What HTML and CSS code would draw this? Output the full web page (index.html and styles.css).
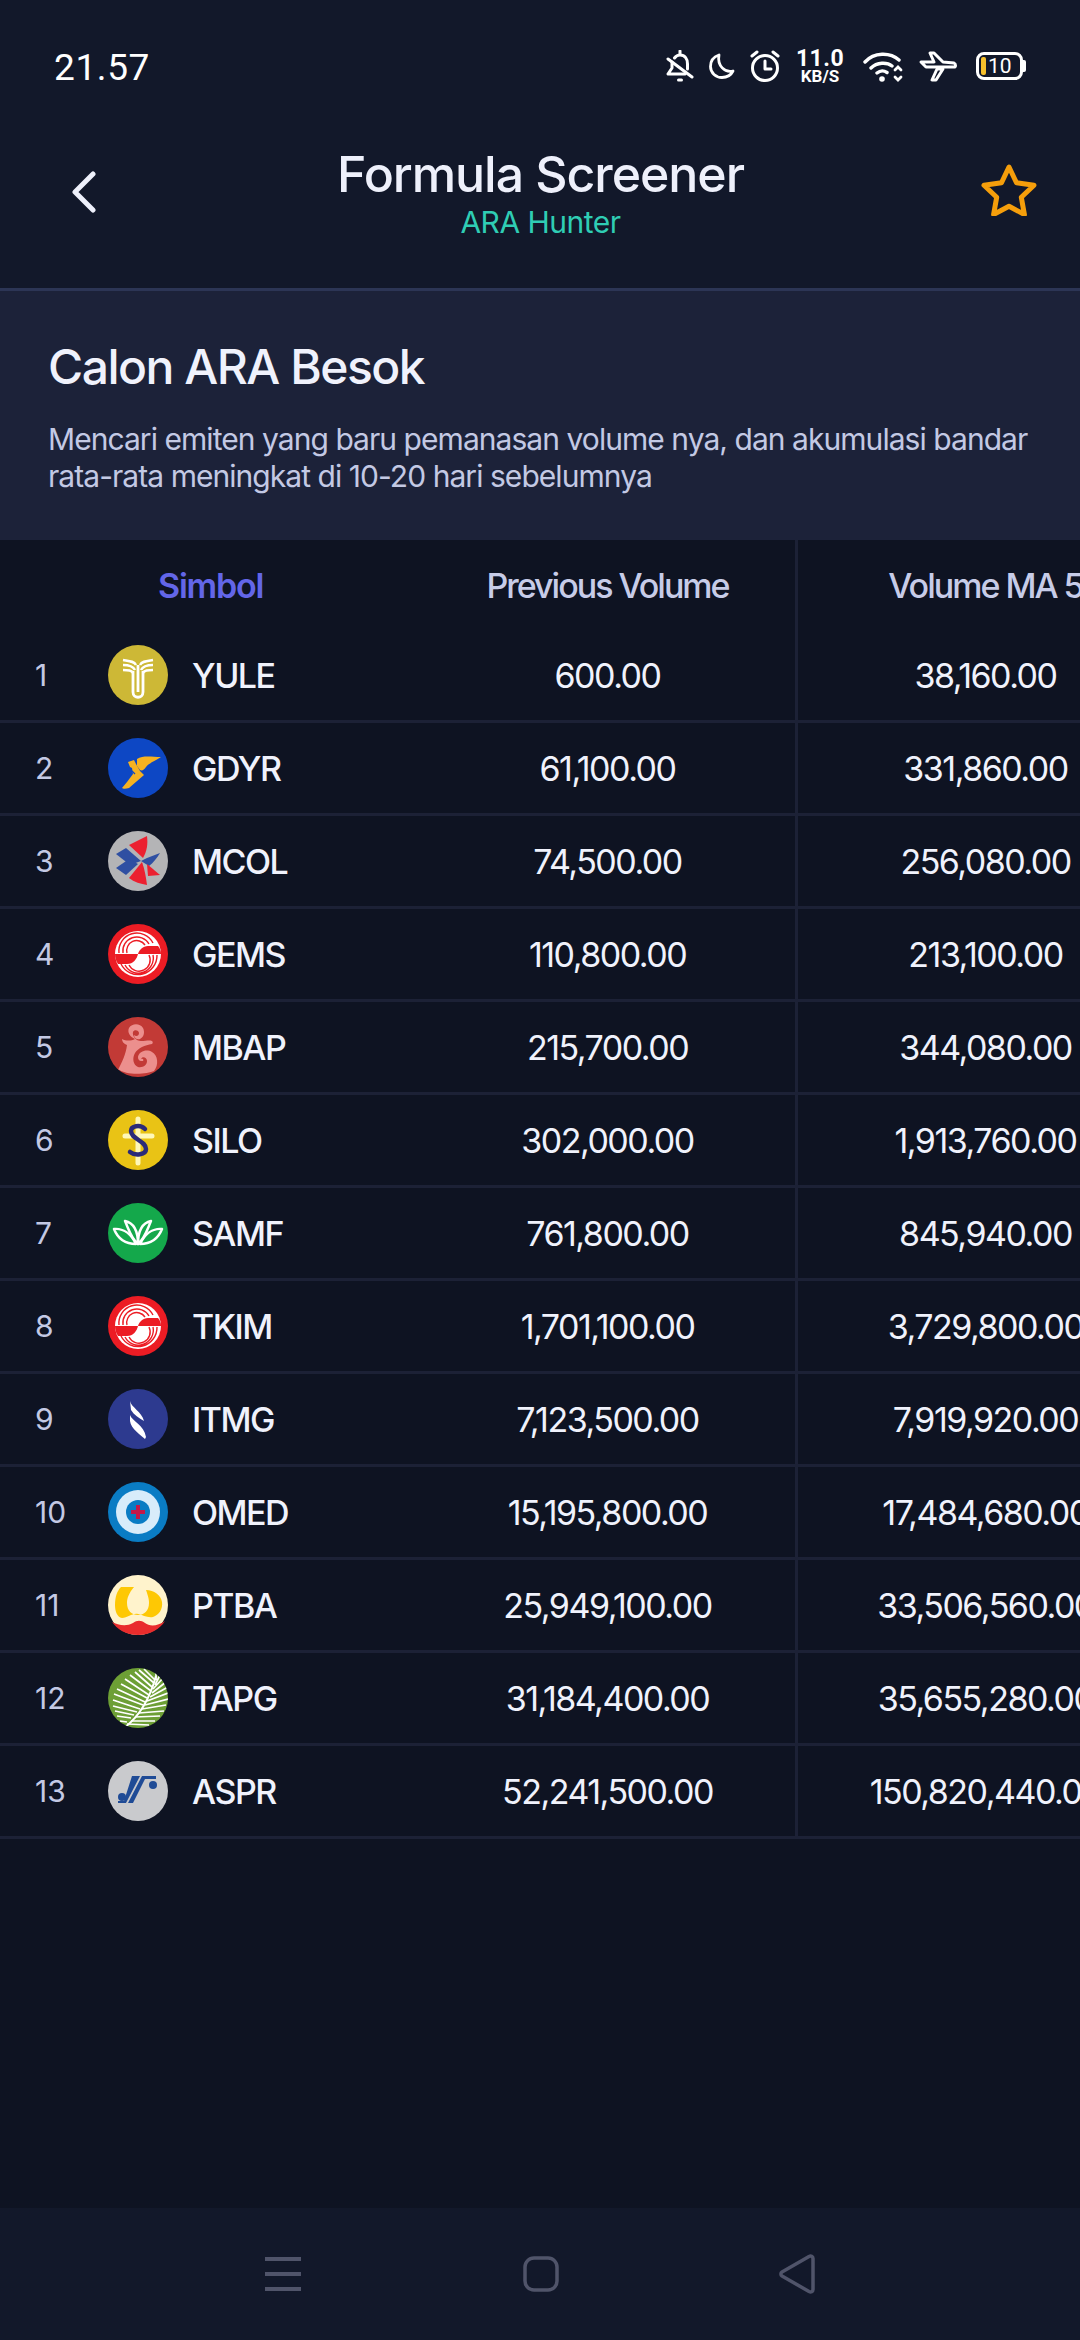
FILE: index.html
```html
<!DOCTYPE html>
<html lang="id">
<head>
<meta charset="utf-8">
<title>Formula Screener</title>
<link rel="stylesheet" href="styles.css">
</head>
<body>
<div class="screen">
  <header class="top">
    <div class="status">
      <span class="clock">21.57</span>
      <div class="status-icons">
        <svg class="i-bell" width="28" height="32" viewBox="0 0 28 32" fill="none" stroke="#fff" stroke-width="3" stroke-linejoin="round" stroke-linecap="round"><path d="M14 1v4M8.500 8C10 6 12 5 14 5c5 0 7.500 4 7.500 9v5M6 12v6l-4 6h17"/><path d="M2 9l24 18"/><path d="M12.500 30h3"/></svg>
        <svg class="i-moon" width="26" height="26" viewBox="0 0 26 26" fill="none" stroke="#fff" stroke-width="2.800" stroke-linejoin="round"><path d="M10 2C4 4 1.500 9 1.500 13.500 1.500 20 7 24.500 13 24.500c5 0 9-2.500 11-6.500-8 2-16-5-14-16z"/></svg>
        <svg class="i-alarm" width="30" height="32" viewBox="0 0 30 32" fill="none" stroke="#fff" stroke-width="3" stroke-linecap="round" stroke-linejoin="round"><circle cx="15" cy="18" r="12.500"/><path d="M15 11v8h6M2 6l5-4M28 6l-5-4"/></svg>
        <div class="speed"><span class="speed-n">11.0</span><span class="speed-u">KB/S</span></div>
        <svg class="i-wifi" width="40" height="31" viewBox="0 0 40 31" fill="none" stroke="#fff" stroke-width="3.400" stroke-linecap="round"><path d="M2 11C11 1 27 1 36 9M8 17c6-6 16-6 21-2M14 22c3-2.500 7-2.500 10-.5"/><circle cx="19" cy="28" r="2.800" fill="#fff" stroke="none"/><path d="M32 19l3-3 3 3M32 26l3 3 3-3" stroke-width="2.800"/></svg>
        <svg class="i-plane" width="38" height="31" viewBox="0 0 38 31" fill="none" stroke="#fff" stroke-width="3" stroke-linejoin="round"><path d="M2 11l5 5h28c2 0 2-3 0-4l-11-1-9-9h-4l4 9H5z"/><path d="M13 29h4l7-11h-6z"/></svg>
        <div class="battery"><span class="battery-fill"></span><span class="battery-n">10</span></div>
      </div>
    </div>
    <div class="titlebar">
      <svg class="back" width="24" height="42" viewBox="0 0 24 42" fill="none" stroke="#eef0fb" stroke-width="5" stroke-linecap="round" stroke-linejoin="round"><path d="M21 3L3 21l18 18"/></svg>
      <div class="titles">
        <div class="title">Formula Screener</div>
        <div class="subtitle">ARA Hunter</div>
      </div>
      <svg class="star" width="56" height="52" viewBox="0 0 56 52" fill="none" stroke="#f59e0b" stroke-width="5" stroke-linejoin="round"><path d="M28 3l7.500 15.800 17.500 2.400-12.700 12.100 3.100 17.200L28 42.200 12.600 50.500l3.100-17.200L3 21.200l17.500-2.400z"/></svg>
    </div>
  </header>

  <section class="banner">
    <h1 class="banner-title">Calon ARA Besok</h1>
    <p class="banner-text">Mencari emiten yang baru pemanasan volume nya, dan akumulasi bandar rata-rata meningkat di 10-20 hari sebelumnya</p>
  </section>

  <main class="table">
    <div class="row head">
      <div class="c-sym head-sym">Simbol</div>
      <div class="c-val">Previous Volume</div>
      <div class="c-val">Volume MA 5</div>
    </div>

    <div class="row">
      <div class="c-sym"><span class="no">1</span>
        <svg class="logo" viewBox="0 0 60 60"><circle cx="30" cy="30" r="30" fill="#cdb836"/><g fill="none" stroke="#fff" stroke-width="2.500"><path d="M15 15c6 1 11 1 13 5M45 15c-6 1-11 1-13 5M15 20c6 0 10 1 12 5M45 20c-6 0-10 1-12 5M15 25c5 0 9 0 10 3M45 25c-5 0-9 0-10 3"/><path d="M25 26v21c0 7 10 7 10 0V26M30 20v27" stroke-width="2.800"/></g></svg>
        <span class="sym">YULE</span></div>
      <div class="c-val">600.00</div><div class="c-val">38,160.00</div>
    </div>

    <div class="row">
      <div class="c-sym"><span class="no">2</span>
        <svg class="logo" viewBox="0 0 60 60"><circle cx="30" cy="30" r="30" fill="#0d47c4"/><path d="M29 21C35 17 44 19 53 19 47 23 41 25 38 29 36 32 34 33 32 32L29 28z" fill="#f6b221"/><path d="M20 24l6-2 2 4 4 7 4 4L21 50c-3 1-6 1-7 0l5-6 6-8-1-6-2-1z" fill="#f6b221"/><path d="M24 33l3 3" stroke="#0d47c4" stroke-width="1.200"/></svg>
        <span class="sym">GDYR</span></div>
      <div class="c-val">61,100.00</div><div class="c-val">331,860.00</div>
    </div>

    <div class="row">
      <div class="c-sym"><span class="no">3</span>
        <svg class="logo" viewBox="0 0 60 60"><circle cx="30" cy="30" r="30" fill="#b4b4b6"/><path d="M21 14l18-9c1 8 0 15-4 22z" fill="#ec2030"/><path d="M39 27l13-5c-3 5-7 10-11 13l-8-5z" fill="#2f4fa2"/><path d="M8 23l10-6 15 13-11 4z" fill="#2f4fa2"/><path d="M8 37l13-9 9 5-12 11z" fill="#2f4fa2"/><path d="M21 47l13-16c3 8 4 16 5 23-6-1-13-3-18-7z" fill="#ec2030"/><path d="M39 33l13 11-12 1z" fill="#ec2030"/></svg>
        <span class="sym">MCOL</span></div>
      <div class="c-val">74,500.00</div><div class="c-val">256,080.00</div>
    </div>

    <div class="row">
      <div class="c-sym"><span class="no">4</span>
        <svg class="logo" viewBox="0 0 60 60"><use href="#sinarmas"/></svg>
        <span class="sym">GEMS</span></div>
      <div class="c-val">110,800.00</div><div class="c-val">213,100.00</div>
    </div>

    <div class="row">
      <div class="c-sym"><span class="no">5</span>
        <svg class="logo" viewBox="0 0 60 60"><circle cx="30" cy="30" r="30" fill="#c23a36"/><path d="M10 53c4-8 8-16 9-25-3-1-5-3-5-6 4 2 9 2 13 0-5-2-8-7-6-11 3-5 11-5 14 0 2 4 1 9-3 11-3 1-6-1-6-4 2 2 5 1 5-2 0-3-5-4-6-1-1 4 3 9 8 9 5 0 8-1 11 0 1 1 1 2 0 3-7 1-14 4-17 9-3 5-2 12 3 14 5 1 9-2 9-6 0-4-5-5-6-2 2-1 3 1 2 2 0 0-5 1-5-4 1-6 9-8 14-5 6 3 7 13 2 19-7 3-27 5-36-2z" fill="#ec8f8d"/></svg>
        <span class="sym">MBAP</span></div>
      <div class="c-val">215,700.00</div><div class="c-val">344,080.00</div>
    </div>

    <div class="row">
      <div class="c-sym"><span class="no">6</span>
        <svg class="logo" viewBox="0 0 60 60"><circle cx="30" cy="30" r="30" fill="#e9c315"/><path d="M17 26h27M30 9v44" stroke="#fff8b8" stroke-width="5" stroke-linecap="round"/><path d="M37 19C32 14 23 16 23 21c0 8 15 10 15 18 0 6-11 7-16 3" fill="none" stroke="#2b2a78" stroke-width="4.500" stroke-linecap="round"/></svg>
        <span class="sym">SILO</span></div>
      <div class="c-val">302,000.00</div><div class="c-val">1,913,760.00</div>
    </div>

    <div class="row">
      <div class="c-sym"><span class="no">7</span>
        <svg class="logo" viewBox="0 0 60 60"><circle cx="30" cy="30" r="30" fill="#14a84b"/><g fill="none" stroke="#fff" stroke-width="2.500" stroke-linejoin="round"><path d="M30 41c-7-6-9-14-13-23 9 2 13 10 13 23z"/><path d="M30 41c7-6 9-14 13-23-9 2-13 10-13 23z"/><path d="M28 41C18 41 10 36 6 26c9-1 17 5 22 15z"/><path d="M32 41c10 0 18-5 22-15-9-1-17 5-22 15z"/></g></svg>
        <span class="sym">SAMF</span></div>
      <div class="c-val">761,800.00</div><div class="c-val">845,940.00</div>
    </div>

    <div class="row">
      <div class="c-sym"><span class="no">8</span>
        <svg class="logo" viewBox="0 0 60 60"><use href="#sinarmas"/></svg>
        <span class="sym">TKIM</span></div>
      <div class="c-val">1,701,100.00</div><div class="c-val">3,729,800.00</div>
    </div>

    <div class="row">
      <div class="c-sym"><span class="no">9</span>
        <svg class="logo" viewBox="0 0 60 60"><circle cx="30" cy="30" r="30" fill="#2d3a8f"/><path d="M22 12c1 6 12 11 14 20-5-3-10-6-13-11zM22 26c2 6 14 10 16 22l-1 2c-4-4-14-10-15-18z" fill="#fff"/></svg>
        <span class="sym">ITMG</span></div>
      <div class="c-val">7,123,500.00</div><div class="c-val">7,919,920.00</div>
    </div>

    <div class="row">
      <div class="c-sym"><span class="no">10</span>
        <svg class="logo" viewBox="0 0 60 60"><circle cx="30" cy="30" r="30" fill="#0a7cc4"/><circle cx="30" cy="30" r="22" fill="#d8ecfa"/><circle cx="30" cy="30" r="12" fill="#0a7cc4"/><path d="M30 23v14M23 30h14" stroke="#c4184a" stroke-width="4"/></svg>
        <span class="sym">OMED</span></div>
      <div class="c-val">15,195,800.00</div><div class="c-val">17,484,680.00</div>
    </div>

    <div class="row">
      <div class="c-sym"><span class="no">11</span>
        <svg class="logo" viewBox="0 0 60 60"><circle cx="30" cy="30" r="30" fill="#fff3cc"/><path d="M4 47c6 3 14 5 21 1 4-3 8-3 12 0 5 4 13 3 20-2-5 8-15 14-27 14S9 54 4 47z" fill="#e92c2c"/><path d="M13 12H26C21 18 19 23 19 28 19 36 24 40 30 40 36 40 41 36 41 28 41 24 40 21 38 15 46 15 53 20 54 27 55 34 51 40 45 42 39 43 35 40 30 39 24 38 20 43 14 43 9 42 7 36 7 30 7 22 9 16 13 12z" fill="#fec804"/></svg>
        <span class="sym">PTBA</span></div>
      <div class="c-val">25,949,100.00</div><div class="c-val">33,506,560.00</div>
    </div>

    <div class="row">
      <div class="c-sym"><span class="no">12</span>
        <svg class="logo" viewBox="0 0 60 60"><clipPath id="leafclip"><circle cx="30" cy="30" r="30"/></clipPath><circle cx="30" cy="30" r="30" fill="#6d9f35"/><g clip-path="url(#leafclip)" fill="none" stroke="#fff" stroke-width="1.700"><path d="M16 60C32 48 42 30 48 8" stroke-width="2"/><path d="M47 12L36 1M46 15L31 2M44 19L27 4M43 23L22 7M41 27L17 11M39 30L13 16M37 34L9 21M35 37L6 26M32 41L5 32M29 44L5 38M26 47L7 43M23 50L9 48M19 54L12 53M48 12L48 1M47 17L53 5M45 21L56 9M44 25L58 14M42 29L60 19M39 33L60 25M37 37L60 31M34 41L58 37M31 45L56 43M27 49L52 48M23 53L47 53M19 56L41 57"/></g></svg>
        <span class="sym">TAPG</span></div>
      <div class="c-val">31,184,400.00</div><div class="c-val">35,655,280.00</div>
    </div>

    <div class="row">
      <div class="c-sym"><span class="no">13</span>
        <svg class="logo" viewBox="0 0 60 60"><circle cx="30" cy="30" r="30" fill="#c9cacd"/><g fill="#1f4b96"><path d="M24 15l8 0-14 27H10v-2h6z"/><path d="M34 15h14v3H37L25 42h-5z"/><circle cx="45" cy="24" r="4"/><circle cx="14" cy="36" r="4"/></g></svg>
        <span class="sym">ASPR</span></div>
      <div class="c-val">52,241,500.00</div><div class="c-val">150,820,440.00</div>
    </div>
  </main>

  <nav class="navbar">
    <svg class="nav-menu" width="36" height="34" viewBox="0 0 36 34" fill="#50546a"><rect y="0" width="36" height="4"/><rect y="15" width="36" height="4"/><rect y="30" width="36" height="4"/></svg>
    <svg class="nav-home" width="36" height="36" viewBox="0 0 36 36" fill="none" stroke="#50546a" stroke-width="3.500"><rect x="2" y="2" width="32" height="32" rx="9"/></svg>
    <svg class="nav-back" width="36" height="40" viewBox="0 0 36 40" fill="none" stroke="#50546a" stroke-width="3.500" stroke-linejoin="round"><path d="M30 2.500L3 18c-1.500 1-1.500 3 0 4l27 15.500c2 1 4 0 4-2V4.500c0-2-2-3-4-2z"/></svg>
  </nav>
</div>
<svg class="defs" width="0" height="0"><defs><g id="sinarmas"><circle cx="30" cy="30" r="30" fill="#ec1c24"/><circle cx="30" cy="30" r="23" fill="#fff"/><path d="M7 30H30C29 35 25 40 19 40H10C8 37 7 34 7 30z" fill="#ec1c24"/><path d="M30 30C31 26 35 22 40 22H50C52 24 53 27 53 30z" fill="#ec1c24"/><g fill="none" stroke="#ec1c24" stroke-width="1.400"><path d="M11 29A18 18 0 0 1 45 19M15 29A14 14 0 0 1 41 20M19 29A10 10 0 0 1 37 21"/><path d="M49 31A19 19 0 0 1 13 40M45 31A15 15 0 0 1 17 41M41 31A11 11 0 0 1 21 41"/></g></g></defs></svg>
</body>
</html>
```

FILE: styles.css
```css
* { box-sizing: border-box; }
html, body { margin: 0; padding: 0; }
body { background: #0e1322; font-family: Inter, "Liberation Sans", sans-serif; }
.defs { position: absolute; }
.screen { width: 1080px; height: 2340px; display: flex; flex-direction: column; overflow: hidden; background: #0e1322; }

.top { height: 291px; background: #12182a; border-bottom: 3px solid #2c3555; display: flex; flex-direction: column; }
.status { height: 134px; padding: 49px 54px 0 54px; display: flex; justify-content: space-between; align-items: flex-start; }
.clock { font-family: Roboto, sans-serif; font-size: 37px; line-height: 38px; color: #fff; letter-spacing: .6px; }
.status-icons { display: flex; align-items: center; height: 34px; }
.i-moon { margin-left: 15px; }
.i-alarm { margin-left: 15px; }
.speed { margin-left: 17px; display: flex; flex-direction: column; align-items: center; font-family: Roboto, sans-serif; font-weight: 700; color: #fff; width: 46px; }
.i-wifi { margin-left: 20px; }
.i-plane { margin-left: 16px; }
.speed-n { font-size: 23px; line-height: 20px; letter-spacing: .5px; }
.speed-u { font-size: 17px; line-height: 15px; }
.battery { position: relative; margin-left: 19px; margin-right: 3px; width: 47px; height: 28px; border: 3px solid #fff; border-radius: 8px; display: flex; align-items: center; padding-left: 2px; gap: 2px; }
.battery::after { content: ""; position: absolute; right: -6px; top: 5px; width: 3px; height: 12px; background: #fff; border-radius: 0 2px 2px 0; }
.battery-fill { width: 5px; height: 18px; background: #f6c02c; border-radius: 2px; flex: none; }
.battery-n { font-family: Roboto, sans-serif; font-size: 21px; line-height: 22px; color: #fff; }

.titlebar { flex: 1; display: flex; align-items: flex-start; justify-content: space-between; padding: 0 43px 0 72px; }
.back { margin-top: 37px; margin-right: 4px; }
.titles { text-align: center; margin-top: 14px; }
.title { font-size: 50px; line-height: 52px; font-weight: 500; color: #eef0fb; letter-spacing: -1.05px; }
.subtitle { font-size: 30px; line-height: 36px; margin-top: 4px; color: #2fcdb4; letter-spacing: -.5px; }
.star { margin-top: 30px; }

.banner { height: 249px; background: #1c2239; padding: 49px 48px 0; }
.banner-title { margin: 0; font-size: 48px; line-height: 54px; font-weight: 500; color: #f0f2fc; letter-spacing: -1.5px; }
.banner-text { margin: 27px 0 0; font-size: 30px; line-height: 36.5px; color: #c3c9e4; letter-spacing: -.95px; }

.table { flex: 1; }
.row { height: 93px; display: flex; border-bottom: 3px solid #1c2136; font-size: 34px; color: #f0f2fc; letter-spacing: -1.5px; }
.row.head { height: 90px; border-bottom: 0; font-weight: 500; color: #c7cce8; letter-spacing: -2px; }
.c-sym { width: 420px; flex: none; display: flex; align-items: center; padding-left: 35px; }
.head-sym { color: #6366e8; padding-left: 158px; font-weight: 600; letter-spacing: -1.2px; }
.c-val { width: 375px; flex: none; display: flex; align-items: center; justify-content: center; white-space: nowrap; }
.c-val + .c-val { border-left: 3px solid #1c2136; width: 378px; }
.no { width: 73px; flex: none; font-size: 30px; color: #c3c9e4; letter-spacing: 0; }
.logo { width: 60px; height: 60px; flex: none; }
.sym { margin-left: 24px; font-weight: 500; }

.navbar { height: 132px; background: #12182a; display: flex; align-items: center; justify-content: center; }
.nav-home { margin: 0 220px 0 222px; }
```
